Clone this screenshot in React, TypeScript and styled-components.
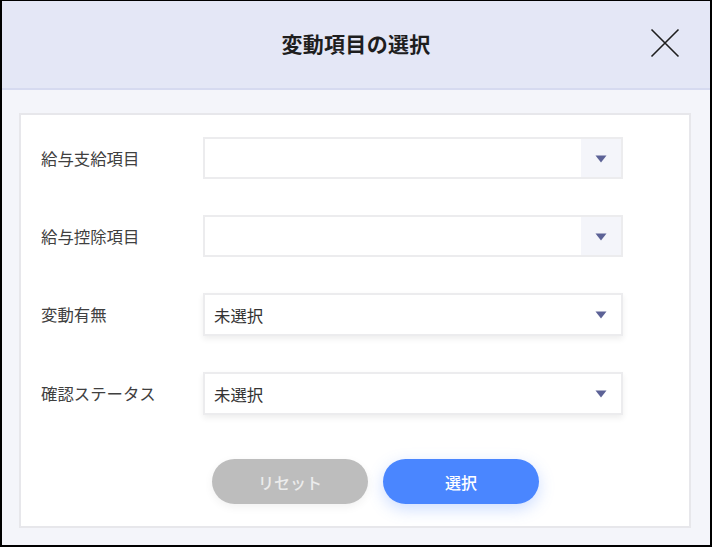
import React from "react";
import styled, { createGlobalStyle } from "styled-components";

const Global = createGlobalStyle`
  html, body { margin: 0; padding: 0; background: #000; }
  body { font-family: "Noto Sans CJK JP", "Noto Sans", sans-serif; }
  * { box-sizing: border-box; }
`;

const Frame = styled.div`
  width: 712px;
  height: 547px;
  border-style: solid;
  border-color: #000;
  border-width: 1px 2px 2px 2px;
  display: flex;
  flex-direction: column;
  background: #f4f5fa;
`;

const Header = styled.header`
  height: 89px;
  flex: none;
  background: #e4e7f6;
  border-bottom: 2px solid #d6daf0;
  display: grid;
  grid-template-columns: 1fr auto 1fr;
  align-items: center;
  padding-bottom: 3px;
`;

const Title = styled.h1`
  grid-column: 2;
  margin: 0;
  font-size: 21px;
  font-weight: 700;
  color: #1e1e1e;
  letter-spacing: 0.3px;
`;

const CloseButton = styled.button`
  grid-column: 3;
  justify-self: end;
  margin-right: 30px;
  width: 30px;
  height: 30px;
  padding: 0;
  border: none;
  background: transparent;
  display: flex;
  align-items: center;
  justify-content: center;
`;

const Body = styled.main`
  flex: 1;
  padding: 23px 19px 17px 17px;
  display: flex;
`;

const Card = styled.section`
  flex: 1;
  background: #fff;
  border: 2px solid #e7e7eb;
  padding: 22px 20px 22px 20px;
  display: flex;
  flex-direction: column;
`;

const Rows = styled.div`
  display: flex;
  flex-direction: column;
  gap: 36px;
`;

const Row = styled.div`
  display: flex;
  align-items: center;
`;

const Label = styled.label`
  width: 162px;
  flex: none;
  font-size: 16.4px;
  color: #404040;
  line-height: 1;
`;

const Select = styled.div<{ $shadow?: boolean }>`
  width: 420px;
  height: ${(p) => (p.$shadow ? "43px" : "42px")};
  border: 2px solid #ececee;
  background: #fff;
  display: flex;
  align-items: stretch;
  box-shadow: ${(p) => (p.$shadow ? "0 3px 6px rgba(0,0,0,0.07)" : "none")};
`;

const Value = styled.span`
  flex: 1;
  display: flex;
  align-items: center;
  padding-left: 9px;
  font-size: 16.4px;
  color: #333;
`;

const ArrowBox = styled.span<{ $filled?: boolean }>`
  width: 40px;
  flex: none;
  background: ${(p) => (p.$filled ? "#f4f5fa" : "transparent")};
  display: flex;
  align-items: center;
  justify-content: center;
  padding-top: 1px;
`;

const Footer = styled.div`
  margin-top: 44px;
  padding-left: 171px;
  display: flex;
  gap: 15px;
`;

const Button = styled.button<{ $primary?: boolean }>`
  width: 156px;
  height: 45px;
  border: none;
  border-radius: 23px;
  font-family: "Noto Sans CJK JP", "Noto Sans", sans-serif;
  font-size: 16px;
  font-weight: 500;
  color: ${(p) => (p.$primary ? "#fff" : "#ececec")};
  background: ${(p) => (p.$primary ? "#4a86ff" : "#bdbdbd")};
  box-shadow: ${(p) =>
    p.$primary ? "0 5px 16px rgba(74,134,255,0.28)" : "0 3px 10px rgba(0,0,0,0.06)"};
`;

const Arrow = () => (
  <svg width="12" height="8" viewBox="0 0 12 8">
    <path d="M0.5 0.5 H11.5 L6 7.5 Z" fill="#5c6296" />
  </svg>
);

const CloseIcon = () => (
  <svg width="30" height="30" viewBox="0 0 30 30">
    <path d="M1.5 1.5 L28.5 28.5 M28.5 1.5 L1.5 28.5" stroke="#1e1e1e" strokeWidth="1.6" fill="none" />
  </svg>
);

const fields = [
  { label: "給与支給項目", value: "", filled: true },
  { label: "給与控除項目", value: "", filled: true },
  { label: "変動有無", value: "未選択", filled: false },
  { label: "確認ステータス", value: "未選択", filled: false },
];

export default function App() {
  return (
    <>
      <Global />
      <Frame>
        <Header>
          <Title>変動項目の選択</Title>
          <CloseButton aria-label="閉じる">
            <CloseIcon />
          </CloseButton>
        </Header>
        <Body>
          <Card>
            <Rows>
              {fields.map((f) => (
                <Row key={f.label}>
                  <Label>{f.label}</Label>
                  <Select $shadow={!f.filled}>
                    <Value>{f.value}</Value>
                    <ArrowBox $filled={f.filled}>
                      <Arrow />
                    </ArrowBox>
                  </Select>
                </Row>
              ))}
            </Rows>
            <Footer>
              <Button>リセット</Button>
              <Button $primary>選択</Button>
            </Footer>
          </Card>
        </Body>
      </Frame>
    </>
  );
}
